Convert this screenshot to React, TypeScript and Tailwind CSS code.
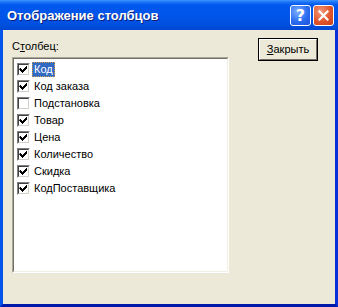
import React from "react";

const items: { label: string; checked: boolean }[] = [
  { label: "Код", checked: true },
  { label: "Код заказа", checked: true },
  { label: "Подстановка", checked: false },
  { label: "Товар", checked: true },
  { label: "Цена", checked: true },
  { label: "Количество", checked: true },
  { label: "Скидка", checked: true },
  { label: "КодПоставщика", checked: true },
];

function Check({ checked }: { checked: boolean }) {
  return (
    <div className="w-[13px] h-[13px] shrink-0 border-t border-l border-t-[#808080] border-l-[#808080] border-b border-r border-b-white border-r-white">
      <div className="w-[11px] h-[11px] bg-white border-t border-l border-t-[#404040] border-l-[#404040] border-b border-r border-b-[#d4d0c8] border-r-[#d4d0c8] relative">
        {checked && (
          <svg width="9" height="9" viewBox="0 0 9 9" className="absolute left-0 top-0">
            <path d="M1 3 h1 v1 h1 v1 h1 v-1 h1 v-1 h1 v-1 h1 v-1 h1 v3 h-1 v1 h-1 v1 h-1 v1 h-1 v1 h-1 v-1 h-1 v-1 h-1 v-1 h-1 z" fill="#000" />
          </svg>
        )}
      </div>
    </div>
  );
}

export default function App() {
  const font = { fontFamily: '"Liberation Sans", Arial, sans-serif' };
  return (
    <div className="w-[338px] h-[307px] flex flex-col bg-[#0055e5] overflow-hidden" style={font}>
      <div className="h-[30px] shrink-0 flex items-center pl-[7px] pr-[4px] bg-[linear-gradient(180deg,#3d95ff_0px,#1f74f5_2px,#0058ee_5px,#0055ea_15px,#0050e0_24px,#0047d2_30px)]">
        <div
          className="text-white font-bold text-[13px] leading-none flex-1 [text-shadow:1px_1px_0_#0a1f7a]"
          style={{ fontFamily: '"Liberation Sans", Arial, sans-serif' }}
        >
          Отображение столбцов
        </div>
        <div className="flex gap-[2px] mt-[1px]">
          <div className="w-[21px] h-[21px] rounded-[3px] border border-white bg-[radial-gradient(circle_at_35%_30%,#7fb0ff,#2a6cf0_55%,#1c50d8)] flex items-center justify-center">
            <span className="text-white font-bold text-[16px] leading-none" style={{ fontFamily: '"DejaVu Sans", sans-serif' }}>?</span>
          </div>
          <div className="w-[21px] h-[21px] rounded-[3px] border border-white bg-[radial-gradient(circle_at_35%_30%,#f29a7c,#e2552c_55%,#c9401c)] flex items-center justify-center">
            <svg width="11" height="11" viewBox="0 0 11 11">
              <path d="M1.5 1.5 L9.5 9.5 M9.5 1.5 L1.5 9.5" stroke="#fff" strokeWidth="2.2" strokeLinecap="square" />
            </svg>
          </div>
        </div>
      </div>
      <div className="flex-1 flex border-l-[3px] border-r-[3px] border-b-[3px] border-l-[#0055ea] border-r-[#0831d9] border-b-[#0019a8]">
        <div className="flex-1 bg-[#ece9d8] flex pl-[9px] text-[11px] text-black">
          <div className="flex flex-col pt-[10px]">
            <div className="h-[13px] leading-[13px]">
              С<span className="underline">т</span>олбец:
            </div>
            <div className="mt-[4px] w-[217px] h-[216px] border-t border-l border-t-[#aca899] border-l-[#aca899] border-b border-r border-b-white border-r-white">
              <div className="w-full h-full bg-white border-t border-l border-t-[#716f64] border-l-[#716f64] border-b border-r border-b-[#f1efe2] border-r-[#f1efe2] pt-[2px] pl-[3px]">
                {items.map((it, i) => (
                  <div key={i} className="h-[17px] flex items-center">
                    <Check checked={it.checked} />
                    <div
                      className={
                        i === 0
                          ? "ml-[2px] px-[1px] h-[15px] leading-[13px] bg-[#316ac5] text-white border border-dotted border-[#ce9f4a]"
                          : "ml-[2px] px-[2px] h-[15px] leading-[15px]"
                      }
                    >
                      {it.label}
                    </div>
                  </div>
                ))}
              </div>
            </div>
          </div>
          <div className="ml-[29px] pt-[8px]">
            <div className="w-[60px] h-[23px] border border-black">
              <div className="w-full h-full border-t border-l border-t-white border-l-white border-b border-r border-b-[#716f64] border-r-[#716f64] flex items-center justify-center bg-[#ece9d8]">
                <span><span className="underline">З</span>акрыть</span>
              </div>
            </div>
          </div>
        </div>
      </div>
    </div>
  );
}
